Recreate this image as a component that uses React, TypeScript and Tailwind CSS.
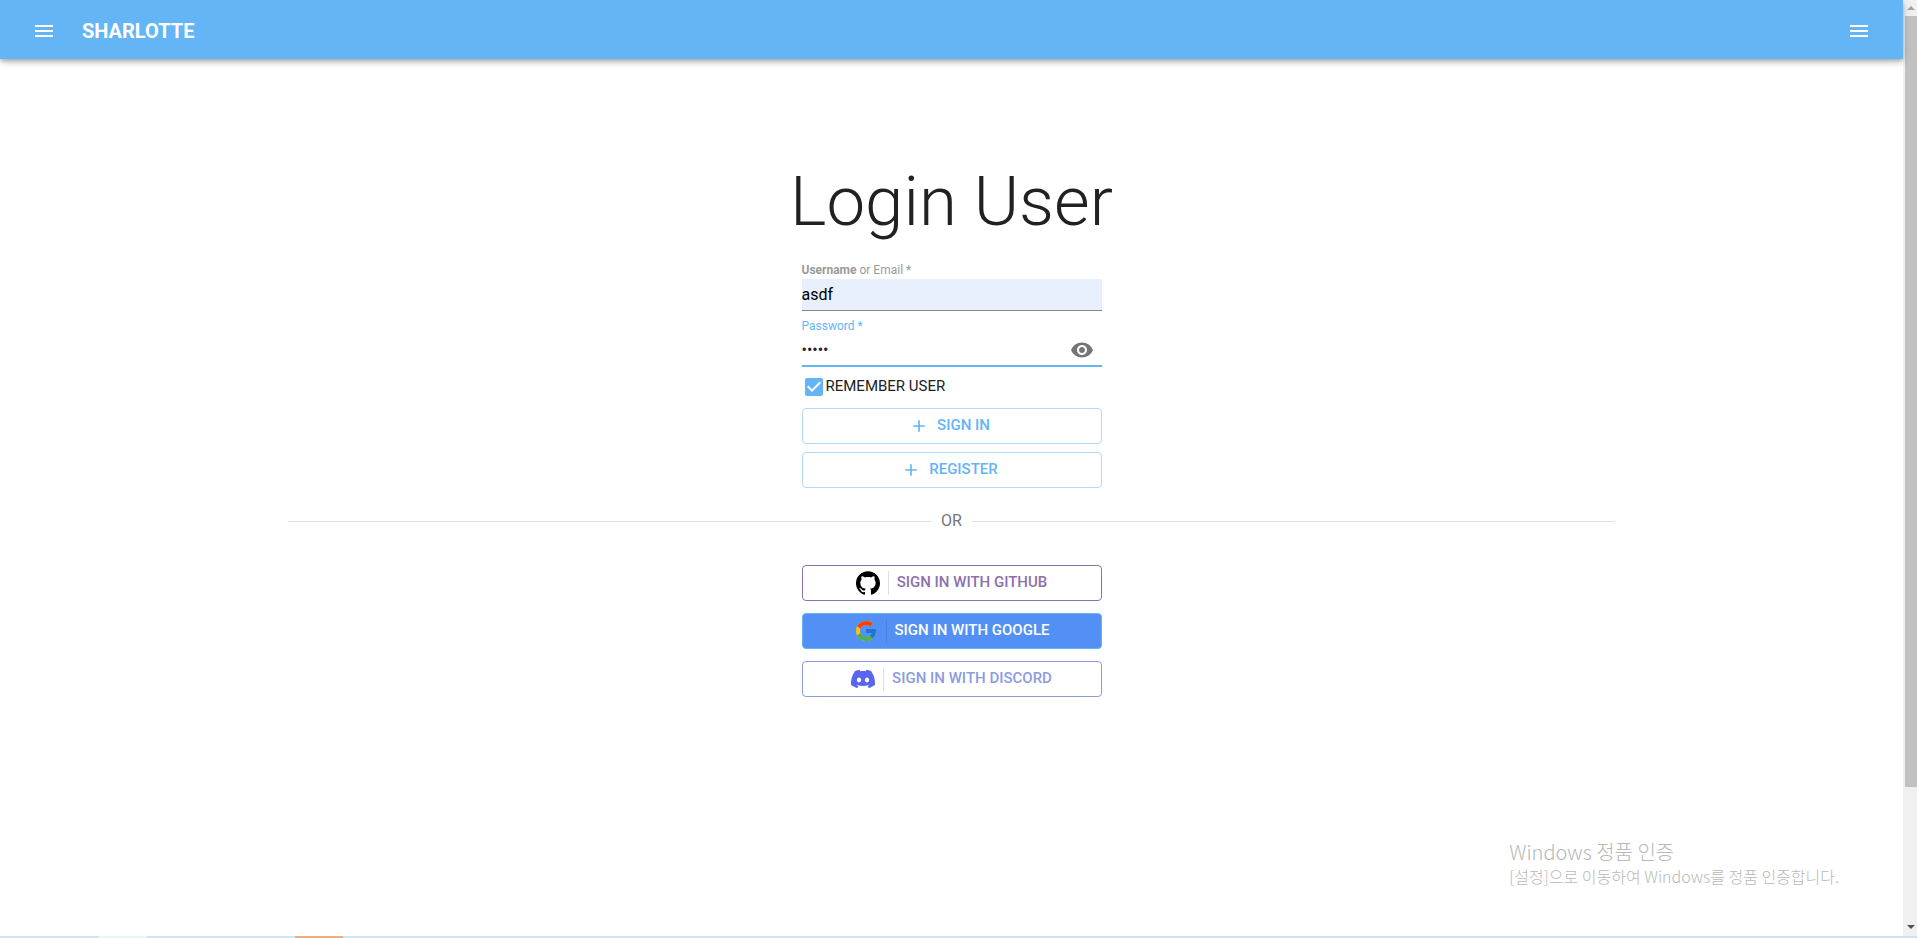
import React, { useState } from 'react';
import { MdAdd, MdCheckBox, MdCheckBoxOutlineBlank, MdMenu, MdVisibility, MdVisibilityOff } from 'react-icons/md';
import { FcGoogle } from 'react-icons/fc';
import { SiDiscord, SiGithub } from 'react-icons/si';

interface ProviderButtonProps {
  icon: React.ReactNode;
  label: string;
  className: string;
  dividerClassName?: string;
}

const ProviderButton: React.FC<ProviderButtonProps> = ({ icon, label, className, dividerClassName = 'bg-[#e0e0e0]' }) => (
  <button
    type="button"
    className={`flex h-9 w-full items-center justify-center gap-2 rounded border text-[15px] font-medium uppercase ${className}`}
  >
    {icon}
    <span className={`h-6 w-px ${dividerClassName}`} />
    <span className="pb-0.5">{label}</span>
  </button>
);

const ActionButton: React.FC<{ label: string; type: 'submit' | 'button' }> = ({ label, type }) => (
  <button
    type={type}
    className="flex h-9 w-full items-center justify-center gap-2 rounded border border-[#b1dafb] pr-1 text-[15px] font-medium uppercase text-[#64b5f6]"
  >
    <MdAdd className="size-5" />
    <span className="pb-0.5">{label}</span>
  </button>
);

const Header: React.FC = () => (
  <header className="relative z-10 flex h-[59px] shrink-0 items-center bg-[#64b5f6] px-8 pt-0.5 text-white shadow-[0_2px_4px_-1px_rgba(0,0,0,0.2),0_4px_5px_0_rgba(0,0,0,0.14),0_1px_10px_0_rgba(0,0,0,0.12)]">
    <button type="button" aria-label="Open menu">
      <MdMenu className="size-6" />
    </button>
    <h1 className="ml-[26px] flex-1 text-xl font-bold">SHARLOTTE</h1>
    <button type="button" aria-label="Open side menu">
      <MdMenu className="size-6" />
    </button>
  </header>
);

const LoginForm: React.FC = () => {
  const [username, setUsername] = useState('asdf');
  const [password, setPassword] = useState('asdfg');
  const [showPassword, setShowPassword] = useState(false);
  const [remember, setRemember] = useState(true);

  return (
    <form className="flex w-[300px] flex-col" onSubmit={(e) => e.preventDefault()}>
      <label htmlFor="username" className="text-xs leading-4 text-[#9a9a9a]">
        <b>Username</b> or Email *
      </label>
      <input
        id="username"
        value={username}
        onChange={(e) => setUsername(e.target.value)}
        className="mt-px h-8 border-b border-[#85858c] bg-[#e8f0fe] text-base text-black outline-none"
      />

      <label htmlFor="password" className="mt-[7px] text-xs leading-4 text-[#64b5f6]">
        Password *
      </label>
      <div className="mt-px flex h-8 items-center border-b-2 border-[#64b5f6]">
        <input
          id="password"
          type={showPassword ? 'text' : 'password'}
          value={password}
          onChange={(e) => setPassword(e.target.value)}
          className="min-w-0 flex-1 text-base text-[#212121] outline-none"
        />
        <button type="button" aria-label="Toggle password visibility" className="mr-2" onClick={() => setShowPassword(!showPassword)}>
          {showPassword ? <MdVisibilityOff className="size-6 text-[#757575]" /> : <MdVisibility className="size-6 text-[#757575]" />}
        </button>
      </div>

      <label htmlFor="remember" className="mt-2 flex h-6 cursor-pointer items-center text-[15px] text-[#212121]">
        <input
          id="remember"
          type="checkbox"
          checked={remember}
          onChange={(e) => setRemember(e.target.checked)}
          className="sr-only"
        />
        {remember ? <MdCheckBox className="size-6 text-[#64b5f6]" /> : <MdCheckBoxOutlineBlank className="size-6 text-[#757575]" />}
        <span className="pb-0.5">REMEMBER USER</span>
      </label>

      <div className="mt-[9px] flex flex-col gap-2">
        <ActionButton type="submit" label="Sign in" />
        <ActionButton type="button" label="Register" />
      </div>
    </form>
  );
};

const App: React.FC = () => (
  <div className="flex h-screen flex-col bg-white font-['Roboto','Noto_Sans_CJK_KR',sans-serif] text-[#212121]">
    <div className="flex min-h-0 flex-1">
      <div className="relative flex min-w-0 flex-1 flex-col">
        <Header />
        <main className="flex flex-col items-center px-72">
          <h2 className="mt-[103px] text-[69px] font-light leading-20">Login User</h2>
          <div className="mt-5">
            <LoginForm />
          </div>

          <div className="mt-[21px] flex w-full items-center gap-2.5 text-base text-[#757575]">
            <span className="h-px flex-1 bg-[#e0e0e0]" />
            OR
            <span className="h-px flex-1 bg-[#e0e0e0]" />
          </div>

          <div className="mt-8 flex w-[300px] flex-col gap-3">
            <ProviderButton icon={<SiGithub className="size-6 text-black" />} label="Sign in with GitHub" className="border-[#8b72ac] text-[#8b72ac]" />
            <ProviderButton
              icon={<FcGoogle className="size-6" />}
              label="Sign in with Google"
              className="border-[#64b5f6] bg-[#5390f5] text-white"
              dividerClassName="bg-[#4a82dd]"
            />
            <ProviderButton icon={<SiDiscord className="size-6 text-[#5865f2]" />} label="Sign in with Discord" className="border-[#8c9cdf] text-[#8c9cdf]" />
          </div>
        </main>

        <div className="absolute bottom-12 right-16 font-['Noto_Sans_CJK_KR',sans-serif] font-light text-[#b8b8b8]">
          <p className="text-xl leading-6">Windows 정품 인증</p>
          <p className="text-base leading-6">[설정]으로 이동하여 Windows를 정품 인증합니다.</p>
        </div>
      </div>

      {/* scroll track */}
      <div className="flex w-3.5 shrink-0 flex-col items-end bg-[#f0f0f0]">
        <svg viewBox="0 0 12 16" className="h-4 w-3 shrink-0 fill-[#a3a3a3]">
          <path d="M2 10h8L6 6z" />
        </svg>
        <div className="h-[82.4%] w-3 bg-[#c1c1c1]" />
        <svg viewBox="0 0 12 16" className="mt-auto h-4 w-3 shrink-0 fill-[#505050]">
          <path d="M2 5h8L6 9z" />
        </svg>
      </div>
    </div>

    {/* taskbar edge */}
    <div className="flex h-0.5 shrink-0 bg-[#d0e5ec]">
      <span className="ml-[99px] w-12 bg-[#eaf5fa]" />
      <span className="ml-[148px] w-12 bg-[#f3ad78]" />
      <span className="ml-auto w-1/2 bg-[#d2dfec]" />
    </div>
  </div>
);

export default App;
